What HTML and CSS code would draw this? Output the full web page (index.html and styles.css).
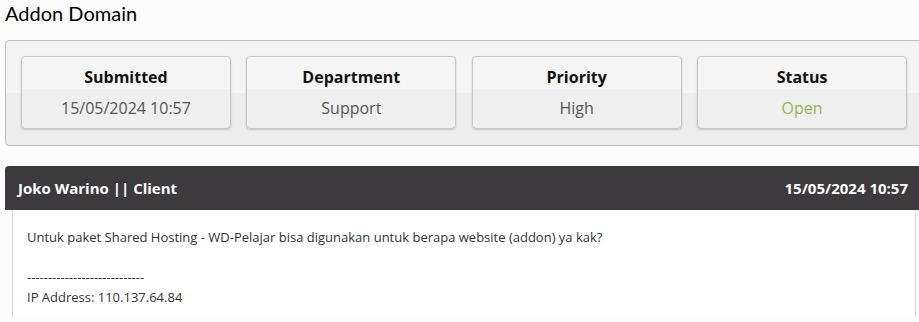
FILE: index.html
```html
<!DOCTYPE html>
<html lang="id">
<head>
    <meta charset="UTF-8">
    <meta name="viewport" content="width=device-width, initial-scale=1.0">
    <title>Addon Domain</title>
    <link rel="stylesheet" href="styles.css">
</head>
<body>

    <div class="ticket">
        <h1 class="ticket-title">Addon Domain</h1>

        <div class="ticket-info">
            <div class="info-card">
                <div class="info-label">Submitted</div>
                <div class="info-value">15/05/2024 10:57</div>
            </div>
            <div class="info-card">
                <div class="info-label">Department</div>
                <div class="info-value">Support</div>
            </div>
            <div class="info-card">
                <div class="info-label">Priority</div>
                <div class="info-value">High</div>
            </div>
            <div class="info-card">
                <div class="info-label">Status</div>
                <div class="info-value status-open">Open</div>
            </div>
        </div>

        <div class="reply">
            <div class="reply-header">
                <span class="reply-author">Joko Warino || Client</span>
                <span class="reply-date">15/05/2024 10:57</span>
            </div>
            <div class="reply-body">
                <p>Untuk paket Shared Hosting - WD-Pelajar bisa digunakan untuk berapa website (addon) ya kak?</p>
                <p class="spacer">&nbsp;</p>
                <p>----------------------------</p>
                <p>IP Address: 110.137.64.84</p>
            </div>
        </div>
    </div>

</body>
</html>
```

FILE: styles.css
```css
body {
    font-family: "Open Sans", Arial, sans-serif;
    margin: 0;
    background-color: #fcfcfc;
    color: #333;
    overflow: hidden;
}
.ticket {
    width: 918px;
    padding-left: 5px;
}
.ticket-title {
    font-family: Lato, "Open Sans", sans-serif;
    font-size: 20px;
    font-weight: normal;
    line-height: 27px;
    color: #000;
    margin: 0 0 13px 0;
}
.ticket-info {
    display: flex;
    gap: 15.5px;
    padding: 15px 15px 16px 15px;
    border: 1px solid #bdbdbd;
    border-radius: 4px;
    background: linear-gradient(#f4f4f4 50%, #ededed 50%);
}
.info-card {
    flex: 1;
    text-align: center;
    padding: 9px 0 9px 0;
    border: 1px solid #c6c6c6;
    border-radius: 4px;
    background: linear-gradient(#f5f5f5 45%, #efefef 45%);
    box-shadow: 0 1px 2px rgba(0, 0, 0, 0.18);
}
.info-label {
    font-size: 16px;
    font-weight: bold;
    line-height: 22px;
    color: #111;
}
.info-value {
    font-size: 16px;
    line-height: 22px;
    margin-top: 9px;
    color: #555;
}
.info-value.status-open {
    color: #97b551;
}
.reply {
    margin-top: 20px;
}
.reply-header {
    display: flex;
    justify-content: space-between;
    align-items: center;
    height: 44px;
    padding: 0 15px 0 13px;
    background-color: #3c3a3d;
    border-radius: 4px 4px 0 0;
    color: #fff;
    font-size: 15px;
    font-weight: bold;
}
.reply-body {
    margin: 0 7px;
    padding: 17px 14px 10px 14px;
    background-color: #fff;
    border-left: 1px solid #dcdcdc;
    border-right: 1px solid #dcdcdc;
    font-size: 13px;
    line-height: 20px;
    color: #333;
}
.reply-body p {
    margin: 0;
}
```
